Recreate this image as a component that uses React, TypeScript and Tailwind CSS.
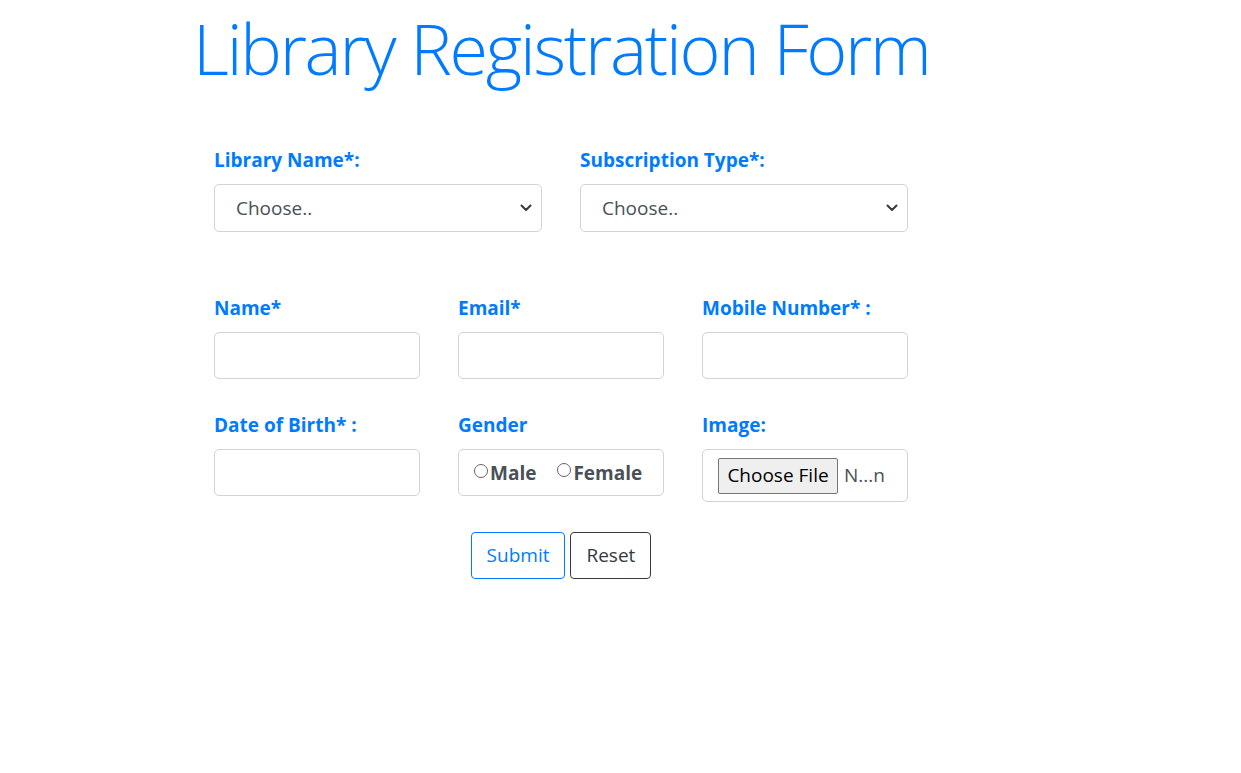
import React from "react";

const Chevron = () => (
  <svg className="pointer-events-none absolute right-[10px] top-1/2 -translate-y-1/2" width="12" height="8" viewBox="0 0 12 8">
    <path d="M1.5 1.5 L6 6 L10.5 1.5" fill="none" stroke="#343a40" strokeWidth="2" strokeLinecap="round" strokeLinejoin="round" />
  </svg>
);

const Label = ({ children }: { children: React.ReactNode }) => (
  <label className="block h-[30px] leading-[30px] mb-[9px] text-[19px] font-bold text-[#007bff] whitespace-nowrap">{children}</label>
);

const Select = () => (
  <div className="relative">
    <select className="appearance-none w-full h-[48px] border border-[#ced4da] rounded-[5px] bg-white pl-[21px] pr-8 text-[19px] text-[#495057] outline-none">
      <option>Choose..</option>
    </select>
    <Chevron />
  </div>
);

const Input = () => (
  <input className="block w-full h-[47px] border border-[#ced4da] rounded-[5px] bg-white px-4 text-[20px] text-[#495057] outline-none" />
);

const Radio = () => (
  <span className="inline-block w-[14px] h-[14px] rounded-full border border-[#666] bg-white relative top-[-3px]" />
);

export default function App() {
  return (
    <div className="min-h-screen bg-white font-['Segoe_UI','Open_Sans',sans-serif]">
      <h1 className="pl-[193px] pt-[6px] text-[70px] leading-[1.2] tracking-[-2.25px] font-light text-[#007bff] whitespace-nowrap">
        Library Registration Form
      </h1>
      <form className="ml-[214px] w-[694px] mt-[55px]">
        <div className="grid grid-cols-2 gap-x-[38px]">
          <div>
            <Label>Library Name*:</Label>
            <Select />
          </div>
          <div>
            <Label>Subscription Type*:</Label>
            <Select />
          </div>
        </div>

        <div className="grid grid-cols-3 gap-x-[38px] mt-[61px]">
          <div>
            <Label>Name*</Label>
            <Input />
          </div>
          <div>
            <Label>Email*</Label>
            <Input />
          </div>
          <div>
            <Label>Mobile Number* :</Label>
            <Input />
          </div>
        </div>

        <div className="grid grid-cols-3 gap-x-[38px] mt-[31px] items-start">
          <div>
            <Label>Date of Birth* :</Label>
            <Input />
          </div>
          <div>
            <Label>Gender</Label>
            <div className="flex items-center h-[47px] border border-[#ced4da] rounded-[5px] bg-white pl-[15px] pt-[2px] text-[19px] font-bold text-[#495057]">
              <Radio />
              <span className="ml-[2px]">Male</span>
              <span className="ml-[21px]"><Radio /></span>
              <span className="ml-[2px]">Female</span>
            </div>
          </div>
          <div>
            <Label>Image:</Label>
            <div className="flex items-center h-[53px] border border-[#ced4da] rounded-[5px] bg-white pl-[15px] text-[19px] text-[#495057]">
              <span className="flex items-center justify-center h-[36px] w-[120px] bg-[#efefef] border border-[#767676] rounded-[2px] text-black">
                Choose File
              </span>
              <span className="ml-[6px]">N...n</span>
            </div>
          </div>
        </div>

        <div className="flex justify-center gap-[5px] mt-[30px]">
          <button type="button" className="h-[47px] px-[15px] border border-[#007bff] rounded-[4px] text-[19px] text-[#007bff] bg-white">
            Submit
          </button>
          <button type="button" className="h-[47px] px-[15px] border border-[#343a40] rounded-[4px] text-[19px] text-[#343a40] bg-white">
            Reset
          </button>
        </div>
      </form>
    </div>
  );
}
